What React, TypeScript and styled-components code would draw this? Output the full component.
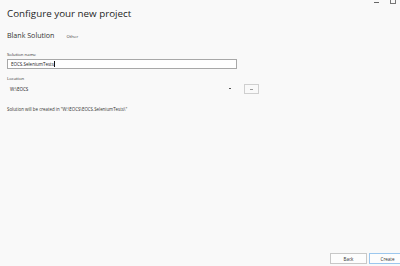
import React from "react";
import styled, { createGlobalStyle } from "styled-components";

const Global = createGlobalStyle`
  html, body { margin: 0; padding: 0; background: #f9f9f9; }
  body { font-family: "Open Sans", "Noto Sans", sans-serif; color: #1e1e1e; }
`;

const Page = styled.div`
  position: relative;
  width: 400px;
  height: 266px;
  overflow: hidden;
  background: #f9f9f9;
  display: flex;
  flex-direction: column;
`;

const WinControls = styled.div`
  position: absolute;
  top: -3px;
  right: 4px;
  display: flex;
  gap: 11px;
  align-items: center;
`;

const WinMin = styled.div`
  width: 5px;
  height: 1px;
  background: #666;
  margin-top: 3px;
`;

const WinMax = styled.div`
  width: 4px;
  height: 5px;
  border: 1px solid #777;
`;

const Content = styled.div`
  padding: 7px 7px 0 7px;
  display: flex;
  flex-direction: column;
  flex: 1;
`;

const Title = styled.h1`
  margin: 0;
  font-size: 9.8px;
  font-weight: 400;
  line-height: 14px;
  color: #1e1e1e;
`;

const SubRow = styled.div`
  display: flex;
  align-items: baseline;
  gap: 12px;
  margin-top: 9px;
`;

const Subtitle = styled.div`
  font-size: 7.1px;
  line-height: 10px;
  color: #333;
`;

const Tag = styled.div`
  font-size: 4.3px;
  color: #444;
`;

const Label = styled.div<{ $mt: number }>`
  font-size: 4.3px;
  line-height: 6px;
  color: #333;
  margin-top: ${(p) => p.$mt}px;
`;

const Input = styled.div`
  margin-top: 2px;
  width: 225px;
  height: 8px;
  border: 1px solid #a8a8a8;
  background: #fff;
  display: flex;
  align-items: center;
  padding-left: 3px;
  font-size: 4.5px;
  color: #222;
`;

const Caret = styled.span`
  display: inline-block;
  width: 1px;
  height: 6px;
  background: #111;
  margin-left: 0.5px;
`;

const LocRow = styled.div`
  display: flex;
  align-items: center;
  margin-top: 2px;
  height: 11px;
`;

const LocValue = styled.div`
  width: 223px;
  padding-left: 3px;
  font-size: 4.5px;
  color: #222;
  display: flex;
  align-items: center;
  justify-content: space-between;
`;

const Arrow = styled.span`
  display: inline-block;
  width: 2px;
  height: 1px;
  background: #555;
  margin-right: 2px;
`;

const Browse = styled.div`
  margin-left: 11px;
  width: 13px;
  height: 8px;
  border: 1px solid #cfcfcf;
  display: flex;
  align-items: center;
  justify-content: center;
`;

const Dots = styled.span`
  width: 3px;
  height: 1px;
  background: #999;
  margin-top: 2px;
`;

const Note = styled.div`
  margin-top: 12px;
  font-size: 4.4px;
  line-height: 6px;
  color: #333;
`;

const Footer = styled.div`
  margin-top: auto;
  display: flex;
  justify-content: flex-end;
  gap: 2px;
  padding-bottom: 2px;
  margin-right: -13px;
`;

const Btn = styled.div<{ $primary?: boolean }>`
  width: 35px;
  height: 9px;
  border: 1px solid ${(p) => (p.$primary ? "#9cc7ee" : "#c8c8c8")};
  background: #fdfdfd;
  font-size: 4.5px;
  color: #333;
  display: flex;
  align-items: center;
  justify-content: center;
`;

export default function App() {
  return (
    <Page>
      <Global />
      <WinControls>
        <WinMin />
        <WinMax />
      </WinControls>
      <Content>
        <Title>Configure your new project</Title>
        <SubRow>
          <Subtitle>Blank Solution</Subtitle>
          <Tag>Other</Tag>
        </SubRow>
        <Label $mt={11}>Solution name</Label>
        <Input>
          EOCS.SeleniumTests<Caret />
        </Input>
        <Label $mt={6}>Location</Label>
        <LocRow>
          <LocValue>
            W:\EOCS
            <Arrow />
          </LocValue>
          <Browse>
            <Dots />
          </Browse>
        </LocRow>
        <Note>Solution will be created in "W:\EOCS\EOCS.SeleniumTests\"</Note>
        <Footer>
          <Btn>Back</Btn>
          <Btn $primary>Create</Btn>
        </Footer>
      </Content>
    </Page>
  );
}
